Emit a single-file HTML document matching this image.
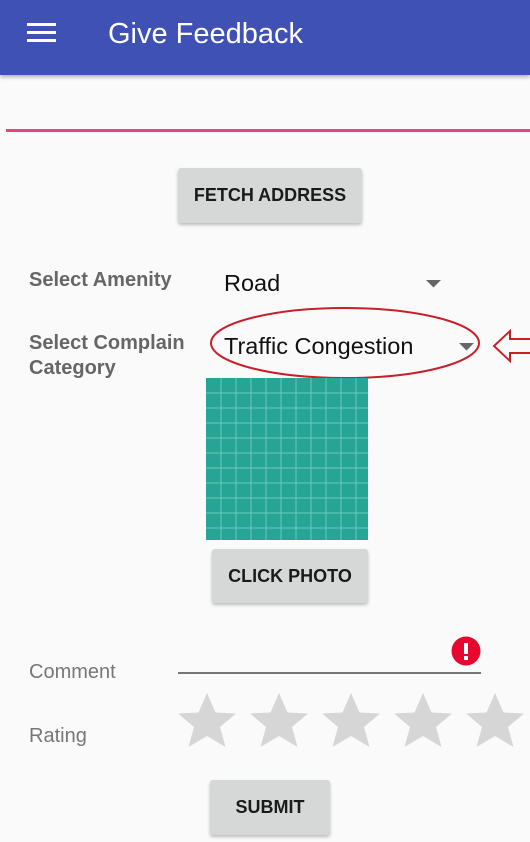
<!DOCTYPE html>
<html><head><meta charset="utf-8">
<style>
*{margin:0;padding:0;box-sizing:border-box}
body{width:530px;height:842px;background:#fafafa;font-family:"Liberation Sans",sans-serif;position:relative;overflow:hidden}
.abs{position:absolute}
.bar{left:0;top:0;width:530px;height:75px;background:#3f51b5;box-shadow:0 2px 4px rgba(0,0,0,.3)}
.title{left:108px;top:16px;color:#fff;font-size:29px;line-height:36px}
.btn{background:#d6d7d7;border-radius:3px;box-shadow:0 2px 3px rgba(0,0,0,.25);color:#1a1a1a;font-size:18px;font-weight:bold;text-align:center}
.lbl{color:#666;font-weight:bold;font-size:20px;line-height:25px}
.val{color:#111;font-size:23.5px}
.gl{color:#777;font-size:20px}
</style></head><body>
<div class="abs bar"></div>
<svg class="abs" style="left:27px;top:22px" width="30" height="22"><rect y="1" width="29" height="3" fill="#fff"/><rect y="9" width="29" height="3" fill="#fff"/><rect y="17" width="29" height="3" fill="#fff"/></svg>
<div class="abs title">Give Feedback</div>
<div class="abs" style="left:6px;top:129px;width:524px;height:3px;background:#e0497f"></div>
<div class="abs btn" style="left:178px;top:168px;width:184px;height:55px;line-height:55px">FETCH ADDRESS</div>
<div class="abs lbl" style="left:29px;top:268px">Select Amenity</div>
<div class="abs val" style="left:224px;top:270px">Road</div>
<svg class="abs" style="left:426px;top:280px" width="16" height="8"><path d="M0 0H15L7.5 7.5Z" fill="#666"/></svg>
<div class="abs lbl" style="left:29px;top:331px">Select Complain<br>Category</div>
<div class="abs val" style="left:224px;top:333px">Traffic Congestion</div>
<svg class="abs" style="left:459px;top:343px" width="16" height="8"><path d="M0 0H15L7.5 7.5Z" fill="#666"/></svg>
<svg class="abs" style="left:208px;top:304px" width="280" height="78"><ellipse cx="137" cy="39" rx="134" ry="35" fill="none" stroke="#c8202a" stroke-width="2"/></svg>
<svg class="abs" style="left:492px;top:328px" width="38" height="36"><path d="M2 18L18 3V11H39V25H18V33Z" fill="none" stroke="#c8202a" stroke-width="2"/></svg>
<svg class="abs" style="left:206px;top:378px" width="162" height="162">
<rect width="162" height="162" fill="#26a596"/>
<g stroke="#8fd8cd" stroke-width="1" opacity=".7">
<path d="M15 0V162M30 0V162M45 0V162M60 0V162M75 0V162M90 0V162M105 0V162M120 0V162M135 0V162M150 0V162"/>
<path d="M0 15H162M0 30H162M0 45H162M0 60H162M0 75H162M0 90H162M0 105H162M0 120H162M0 135H162M0 150H162"/>
</g></svg>
<div class="abs btn" style="left:212px;top:549px;width:156px;height:54px;line-height:54px">CLICK PHOTO</div>
<div class="abs gl" style="left:29px;top:661px">Comment</div>
<div class="abs" style="left:178px;top:672px;width:303px;height:2px;background:#777"></div>
<svg class="abs" style="left:451px;top:636px" width="30" height="30"><circle cx="15" cy="15" r="14.5" fill="#e8072f"/><rect x="13" y="7" width="4" height="11" fill="#fff"/><rect x="13" y="20" width="4" height="4" fill="#fff"/></svg>
<div class="abs gl" style="left:29px;top:725px">Rating</div>
<svg class="abs" style="left:170px;top:688px" width="360" height="66">
<defs><path id="s" d="M0 -30L8.5 -10.5L29 -9.5L13 4L18.5 24L0 13L-18.5 24L-13 4L-29 -9.5L-8.5 -10.5Z" fill="#d6d6d6"/></defs>
<use href="#s" x="37" y="35"/><use href="#s" x="109" y="35"/><use href="#s" x="181" y="35"/><use href="#s" x="253" y="35"/><use href="#s" x="325" y="35"/>
</svg>
<div class="abs btn" style="left:210px;top:780px;width:120px;height:55px;line-height:55px">SUBMIT</div>
</body></html>
